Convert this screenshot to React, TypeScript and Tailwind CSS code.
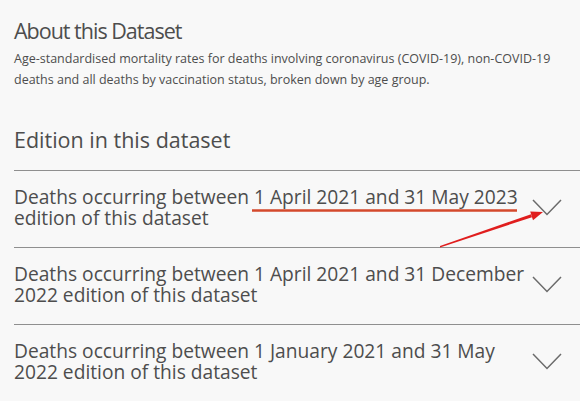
import React from 'react';

interface Edition {
  id: string;
  title: string;
}

const editions: Edition[] = [
  { id: 'may-2023', title: 'Deaths occurring between 1 April 2021 and 31 May 2023 edition of this dataset' },
  { id: 'dec-2022', title: 'Deaths occurring between 1 April 2021 and 31 December 2022 edition of this dataset' },
  { id: 'may-2022', title: 'Deaths occurring between 1 January 2021 and 31 May 2022 edition of this dataset' },
];

const Chevron: React.FC = () => (
  <svg width="30" height="17" viewBox="0 0 30 17" fill="none" className="shrink-0">
    <path d="M1 1 L15 15.5 L29 1" stroke="#6b6b6b" strokeWidth="1.5" />
  </svg>
);

// red markup drawn on top of the screenshot
const Annotations: React.FC = () => (
  <svg className="pointer-events-none absolute inset-0" width="580" height="401">
    <line x1="252" y1="210.5" x2="517" y2="210.5" stroke="#d4492c" strokeWidth="2.5" />
    <polygon points="440,247.5 532,217.2 531,214.2 440,246" fill="#e01e1e" />
    <polygon points="543,212 533,220.2 530.2,211.6" fill="#e01e1e" />
  </svg>
);

export default function App() {
  return (
    <div className="relative min-h-[401px] overflow-hidden bg-[#f8f8f8] pl-[14px] pt-[18px] font-['Open_Sans',sans-serif] text-[#4d4d4d]">
      <h1 className="text-[21.5px] leading-[26px] tracking-[-1px]">About this Dataset</h1>
      <p className="mt-[4px] pr-[20px] text-[12.5px] leading-[21px]">
        Age-standardised mortality rates for deaths involving coronavirus (COVID-19), non-COVID-19 deaths and all
        deaths by vaccination status, broken down by age group.
      </p>

      <h2 className="mt-[37px] text-[21.5px] leading-[26px]">Edition in this dataset</h2>

      <ul className="mt-[17px]">
        {editions.map((e) => (
          <li key={e.id} className="flex items-center border-t border-[#8f8f8f] pt-[15px] pb-[19px]">
            <span className="flex-1 text-[19.2px] leading-[21px]">{e.title}</span>
            <span className="mr-[18px] flex w-[30px] justify-center">
              <Chevron />
            </span>
          </li>
        ))}
      </ul>

      <Annotations />
    </div>
  );
}
